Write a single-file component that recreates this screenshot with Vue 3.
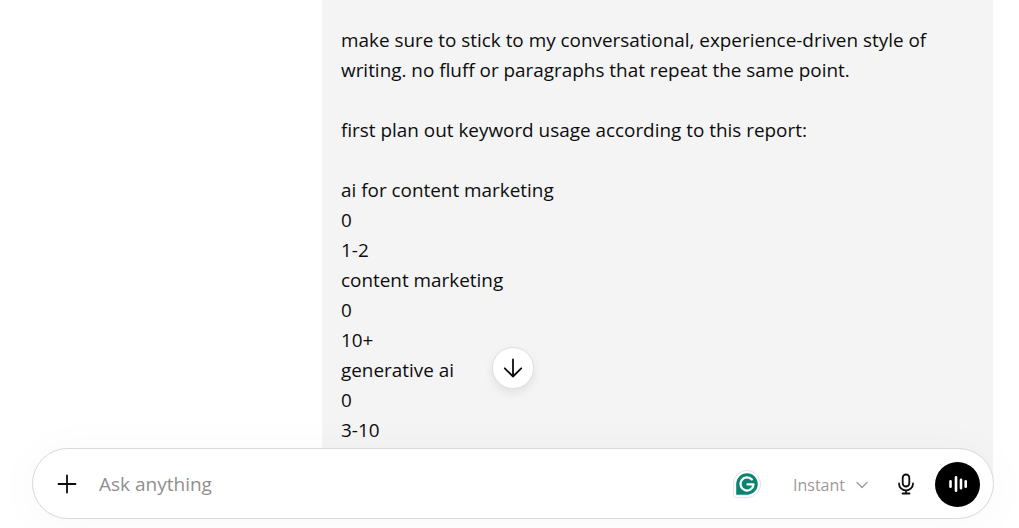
<template>
  <div class="page">
    <div class="thread">
      <div class="bubble">
        <p v-for="(line, i) in lines" :key="i" class="line">{{ line || '\u00a0' }}</p>
      </div>
    </div>

    <button class="scroll-btn" aria-label="Scroll to bottom">
      <svg width="24" height="24" viewBox="0 0 24 24" fill="none" stroke="#0d0d0d" stroke-width="1.800" stroke-linecap="round" stroke-linejoin="round">
        <path d="M12 3.500v17M3.800 12.300l8.200 8.200 8.200-8.200" />
      </svg>
    </button>

    <div class="composer">
      <button class="plus" aria-label="Add">
        <svg width="24" height="24" viewBox="0 0 24 24" fill="none" stroke="#0d0d0d" stroke-width="1.800" stroke-linecap="round">
          <path d="M12 3.500v17M3.500 12h17" />
        </svg>
      </button>
      <span class="placeholder">Ask anything</span>

      <svg class="grammarly" width="30" height="30" viewBox="0 0 32 32">
        <path d="M16 1.500a14.500 14.500 0 0 1 0 29H4a2.500 2.500 0 0 1-2.500-2.500V16A14.500 14.500 0 0 1 16 1.500z" fill="#fff" stroke="#dfe1ea" stroke-width="1" />
        <path d="M16 4.500a11.500 11.500 0 0 1 0 23H4.500V16A11.500 11.500 0 0 1 16 4.500z" fill="#0a8470" />
        <path d="M21.200 11.200a7 7 0 1 0 1.800 5.300h-6.500" fill="none" stroke="#fff" stroke-width="2.400" stroke-linecap="round" stroke-linejoin="round" />
      </svg>

      <div class="model">
        <span>Instant</span>
        <svg width="16" height="16" viewBox="0 0 16 16" fill="none" stroke="#9b9b9b" stroke-width="1.300" stroke-linecap="round" stroke-linejoin="round">
          <path d="M3 5.500l5 5 5-5" />
        </svg>
      </div>

      <svg class="mic" width="24" height="24" viewBox="0 0 24 24" fill="none" stroke="#0d0d0d" stroke-width="1.800" stroke-linecap="round">
        <rect x="8.700" y="2.500" width="6.600" height="12" rx="3.300" />
        <path d="M5 11.500a7 7 0 0 0 14 0M12 18.500v2.800M8.500 21.500h7" />
      </svg>

      <button class="voice" aria-label="Voice mode">
        <svg width="24" height="24" viewBox="0 0 24 24" fill="none" stroke="#fff" stroke-width="2.600" stroke-linecap="round">
          <path d="M4.500 9.300v5.400M10 5.300v13.400M15 7.800v8.400M19.700 9.300v5.400" />
        </svg>
      </button>
    </div>
  </div>
</template>

<script setup>
const lines = [
  'make sure to stick to my conversational, experience-driven style of',
  'writing. no fluff or paragraphs that repeat the same point.',
  '',
  'first plan out keyword usage according to this report:',
  '',
  'ai for content marketing',
  '0',
  '1-2',
  'content marketing',
  '0',
  '10+',
  'generative ai',
  '0',
  '3-10',
]
</script>

<style>
html, body {
  margin: 0;
  background: #fff;
}
</style>

<style scoped>
.page {
  position: relative;
  height: 528px;
  overflow: hidden;
  background: #fff;
  font-family: "Open Sans", "Noto Sans", sans-serif;
  color: #0d0d0d;
}

.thread {
  display: flex;
  justify-content: flex-end;
  padding-right: 26px;
}

.bubble {
  width: 671px;
  height: 490px;
  padding: 25px 0 0 19px;
  box-sizing: border-box;
  background: #f4f4f4;
}

.line {
  margin: 0;
  font-size: 18.900px;
  line-height: 30px;
  white-space: pre;
}

.scroll-btn {
  position: absolute;
  left: 492px;
  top: 347px;
  z-index: 3;
  width: 42px;
  height: 42px;
  padding: 0;
  display: flex;
  align-items: center;
  justify-content: center;
  background: #fff;
  border: 1px solid #e0e0e0;
  border-radius: 50%;
  box-shadow: 0 4px 10px rgba(0, 0, 0, 0.08);
}

.composer {
  position: absolute;
  left: 32px;
  right: 25px;
  bottom: 9px;
  z-index: 2;
  height: 71px;
  box-sizing: border-box;
  display: flex;
  align-items: center;
  padding: 0 13px 0 22px;
  background: #fff;
  border: 1px solid #d9d9d9;
  border-radius: 36px;
  box-shadow: 0 4px 50px rgba(0, 0, 0, 0.03);
}

.plus {
  width: 24px;
  height: 24px;
  padding: 0;
  background: none;
  border: 0;
}

.placeholder {
  margin-left: 20px;
  flex: 1;
  font-size: 19px;
  color: #8f8f8f;
}

.grammarly {
  margin-right: 31px;
}

.model {
  display: flex;
  align-items: center;
  gap: 9px;
  margin: 2px 24px 0 0;
  font-size: 16px;
  color: #9b9b9b;
}

.mic {
  margin-right: 17px;
}

.voice {
  width: 45px;
  height: 45px;
  padding: 0;
  margin-top: 1px;
  display: flex;
  align-items: center;
  justify-content: center;
  background: #000;
  border: 0;
  border-radius: 50%;
}
</style>
